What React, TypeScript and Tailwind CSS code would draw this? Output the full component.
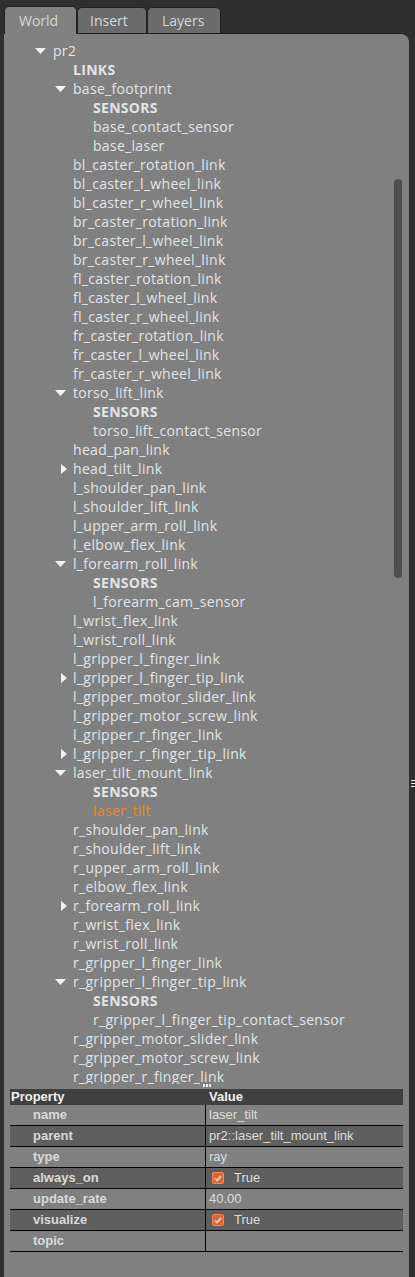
import React from 'react';

type Row = {
  level: 0 | 1 | 2;
  text: string;
  open?: boolean;
  closed?: boolean;
  bold?: boolean;
  active?: boolean;
};

const rows: Row[] = [
  { level: 0, text: 'pr2', open: true },
  { level: 1, text: 'LINKS', bold: true },
  { level: 1, text: 'base_footprint', open: true },
  { level: 2, text: 'SENSORS', bold: true },
  { level: 2, text: 'base_contact_sensor' },
  { level: 2, text: 'base_laser' },
  { level: 1, text: 'bl_caster_rotation_link' },
  { level: 1, text: 'bl_caster_l_wheel_link' },
  { level: 1, text: 'bl_caster_r_wheel_link' },
  { level: 1, text: 'br_caster_rotation_link' },
  { level: 1, text: 'br_caster_l_wheel_link' },
  { level: 1, text: 'br_caster_r_wheel_link' },
  { level: 1, text: 'fl_caster_rotation_link' },
  { level: 1, text: 'fl_caster_l_wheel_link' },
  { level: 1, text: 'fl_caster_r_wheel_link' },
  { level: 1, text: 'fr_caster_rotation_link' },
  { level: 1, text: 'fr_caster_l_wheel_link' },
  { level: 1, text: 'fr_caster_r_wheel_link' },
  { level: 1, text: 'torso_lift_link', open: true },
  { level: 2, text: 'SENSORS', bold: true },
  { level: 2, text: 'torso_lift_contact_sensor' },
  { level: 1, text: 'head_pan_link' },
  { level: 1, text: 'head_tilt_link', closed: true },
  { level: 1, text: 'l_shoulder_pan_link' },
  { level: 1, text: 'l_shoulder_lift_link' },
  { level: 1, text: 'l_upper_arm_roll_link' },
  { level: 1, text: 'l_elbow_flex_link' },
  { level: 1, text: 'l_forearm_roll_link', open: true },
  { level: 2, text: 'SENSORS', bold: true },
  { level: 2, text: 'l_forearm_cam_sensor' },
  { level: 1, text: 'l_wrist_flex_link' },
  { level: 1, text: 'l_wrist_roll_link' },
  { level: 1, text: 'l_gripper_l_finger_link' },
  { level: 1, text: 'l_gripper_l_finger_tip_link', closed: true },
  { level: 1, text: 'l_gripper_motor_slider_link' },
  { level: 1, text: 'l_gripper_motor_screw_link' },
  { level: 1, text: 'l_gripper_r_finger_link' },
  { level: 1, text: 'l_gripper_r_finger_tip_link', closed: true },
  { level: 1, text: 'laser_tilt_mount_link', open: true },
  { level: 2, text: 'SENSORS', bold: true },
  { level: 2, text: 'laser_tilt', active: true },
  { level: 1, text: 'r_shoulder_pan_link' },
  { level: 1, text: 'r_shoulder_lift_link' },
  { level: 1, text: 'r_upper_arm_roll_link' },
  { level: 1, text: 'r_elbow_flex_link' },
  { level: 1, text: 'r_forearm_roll_link', closed: true },
  { level: 1, text: 'r_wrist_flex_link' },
  { level: 1, text: 'r_wrist_roll_link' },
  { level: 1, text: 'r_gripper_l_finger_link' },
  { level: 1, text: 'r_gripper_l_finger_tip_link', open: true },
  { level: 2, text: 'SENSORS', bold: true },
  { level: 2, text: 'r_gripper_l_finger_tip_contact_sensor' },
  { level: 1, text: 'r_gripper_motor_slider_link' },
  { level: 1, text: 'r_gripper_motor_screw_link' },
  { level: 1, text: 'r_gripper_r_finger_link' },
];

const indent = ['pl-[29px]', 'pl-[49px]', 'pl-[69px]'];

const props = [
  { name: 'name', value: 'laser_tilt' },
  { name: 'parent', value: 'pr2::laser_tilt_mount_link' },
  { name: 'type', value: 'ray' },
  { name: 'always_on', check: true },
  { name: 'update_rate', value: '40.00' },
  { name: 'visualize', check: true },
  { name: 'topic', value: '' },
];

const TreeRow: React.FC<{ row: Row }> = ({ row }) => (
  <div className={`flex items-center h-[19px] ${indent[row.level]}`}>
    <div className="w-[20px] flex items-center">
      {row.open && (
        <svg width="11" height="6" viewBox="0 0 11 6" className="ml-[2px]">
          <path d="M0 0 L11 0 L5.5 6 Z" fill="#f2f2f2" />
        </svg>
      )}
      {row.closed && (
        <svg width="6" height="10" viewBox="0 0 6 10" className="ml-[8px]">
          <path d="M0 0 L6 5 L0 10 Z" fill="#f2f2f2" />
        </svg>
      )}
    </div>
    <span
      className={`whitespace-nowrap text-[14px] tracking-[0.3px] ${row.bold ? 'font-bold' : ''} ${
        row.active ? 'text-[#f5831f]' : 'text-[#e1e4e6]'
      }`}
    >
      {row.text}
    </span>
  </div>
);

const Check = () => (
  <span className="w-[12px] h-[12px] rounded-[2px] bg-[#e0642f] border border-[#f08a5c] flex items-center justify-center">
    <svg width="8" height="7" viewBox="0 0 8 7">
      <path d="M1 3.5 L3 5.5 L7 1" stroke="#f4e6dc" strokeWidth="1.6" fill="none" />
    </svg>
  </span>
);

export default function App() {
  return (
    <div className="w-[415px] h-[1277px] bg-[#2f2f2f] flex overflow-hidden font-['Open_Sans',sans-serif]">
      <div className="w-[405px] ml-[4px] flex flex-col">
        {/* tabs */}
        <div className="h-[33px] flex items-end text-[14px] text-[#d3d7da] relative z-10">
          <div className="w-[73px] h-[28px] bg-[#808080] border border-b-0 border-[#222] rounded-t-[5px] flex items-center pl-[14px] -mb-px pb-px">
            World
          </div>
          <div className="w-[70px] h-[26px] bg-[#6b6b6b] border border-b-0 border-[#222] rounded-t-[5px] flex items-center pl-[12px]">
            Insert
          </div>
          <div className="w-[74px] h-[26px] bg-[#6b6b6b] border border-b-0 border-[#222] rounded-t-[5px] flex items-center pl-[14px]">
            Layers
          </div>
        </div>

        {/* panel */}
        <div className="flex-1 bg-[#808080] border-t border-[#1e1e1e] rounded-tr-[8px] flex flex-col">
          <div className="h-[1050px] overflow-hidden relative pt-[7px]">
            {rows.map((r, i) => (
              <TreeRow key={i} row={r} />
            ))}
            <div className="absolute right-[7px] top-[145px] w-[8px] h-[399px] rounded-full bg-[#4e4e4e]" />
          </div>

          {/* splitter */}
          <div className="h-[5px] flex items-start pl-[199px] gap-px">
            <span className="w-[2px] h-[3px] bg-[#f0f0f0]" />
            <span className="w-[2px] h-[3px] bg-[#f0f0f0]" />
            <span className="w-[2px] h-[3px] bg-[#f0f0f0]" />
          </div>

          {/* property table */}
          <div className="ml-[6px] w-[393px] font-['Liberation_Sans',Arial,sans-serif] text-[13px]">
            <div className="flex h-[16px] bg-[#404040] text-[#f2f2f2] font-bold items-center">
              <div className="w-[196px] pl-[1px]">Property</div>
              <div className="pl-[3px]">Value</div>
            </div>
            {props.map((p, i) => (
              <div
                key={p.name}
                className={`flex h-[21px] border-b border-black ${i % 2 === 1 ? 'bg-[#5f5f5f]' : 'bg-[#808080]'}`}
              >
                <div className="w-[196px] pl-[23px] flex items-center font-bold text-[#d9d9d9] border-r border-black">
                  {p.name}
                </div>
                <div className="flex-1 pl-[3px] flex items-center text-[#dedede]">
                  {p.check ? (
                    <span className="flex items-center gap-[10px] pl-[3px]">
                      <Check />
                      <span>True</span>
                    </span>
                  ) : (
                    p.value
                  )}
                </div>
              </div>
            ))}
          </div>
        </div>
      </div>

      {/* right splitter strip */}
      <div className="w-[6px] flex flex-col items-end pt-[780px] gap-[2px]">
        <span className="w-[4px] h-px bg-[#f0f0f0]" />
        <span className="w-[4px] h-px bg-[#f0f0f0]" />
        <span className="w-[4px] h-px bg-[#f0f0f0]" />
      </div>
    </div>
  );
}
